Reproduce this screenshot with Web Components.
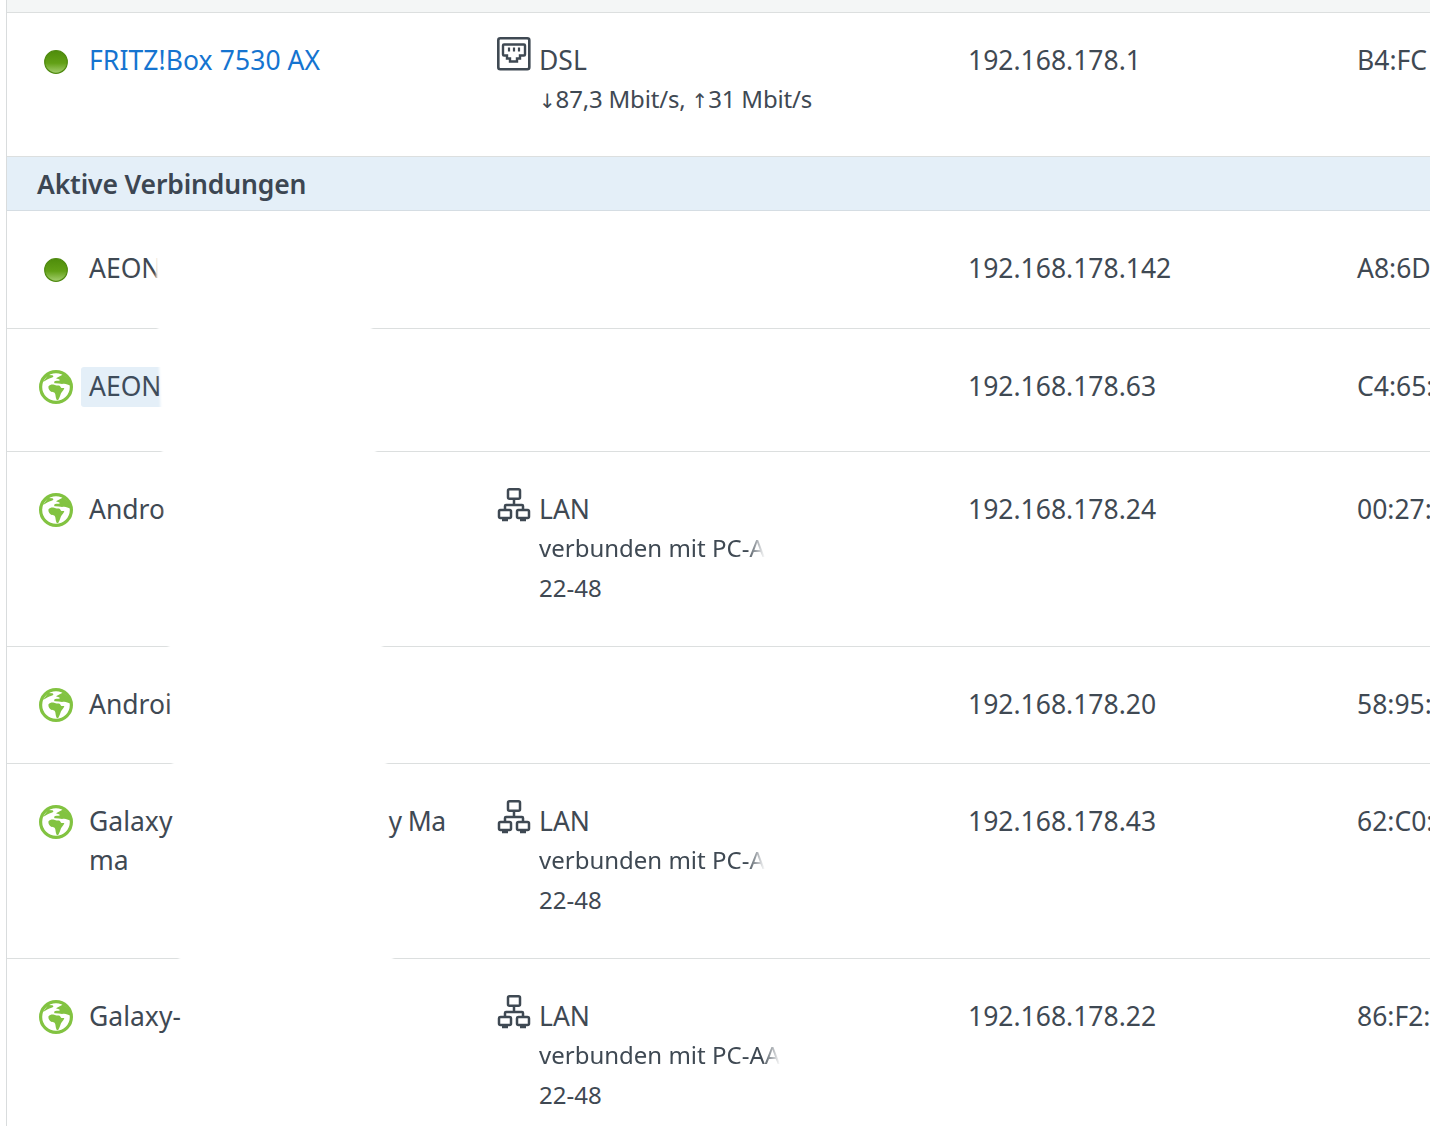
<!DOCTYPE html>
<html lang="de">
<head>
<meta charset="utf-8">
<title>Netzwerk</title>
<style>
  html, body { margin: 0; height: 100%; background: #fff; overflow: hidden; }
  body { font-family: "Noto Sans", "Liberation Sans", sans-serif; color: #3f4953; }
</style>
</head>
<body>

<net-table>
  <net-row height="144" top="47">
    <status-icon slot="icon" type="dot"></status-icon>
    <a slot="name" style="color:#1574d0;letter-spacing:.08px">FRITZ!Box 7530 AX</a>
    <conn-cell type="dsl" label="DSL">
      <speed-line><speed-arrow>↓</speed-arrow>87,3 Mbit/s, <speed-arrow>↑</speed-arrow>31 Mbit/s</speed-line>
    </conn-cell>
    <span slot="ip">192.168.178.1</span>
    <span slot="mac">B4:FC</span>
  </net-row>

  <net-section>Aktive Verbindungen</net-section>

  <net-row height="118" top="57">
    <status-icon slot="icon" type="dot"></status-icon>
    <span slot="name">AEON</span>
    <span slot="ip">192.168.178.142</span>
    <span slot="mac">A8:6D</span>
  </net-row>
  <net-row height="123" top="57">
    <status-icon slot="icon" type="globe"></status-icon>
    <name-badge slot="name">AEON</name-badge>
    <span slot="ip">192.168.178.63</span>
    <span slot="mac">C4:65:</span>
  </net-row>
  <net-row height="195" top="57">
    <status-icon slot="icon" type="globe"></status-icon>
    <span slot="name">Andro</span>
    <conn-cell type="lan" label="LAN">
      <fade-text>verbunden mit PC-A</fade-text>
      <div>22-48</div>
    </conn-cell>
    <span slot="ip">192.168.178.24</span>
    <span slot="mac">00:27:</span>
  </net-row>
  <net-row height="117" top="57">
    <status-icon slot="icon" type="globe"></status-icon>
    <span slot="name">Androi</span>
    <span slot="ip">192.168.178.20</span>
    <span slot="mac">58:95:</span>
  </net-row>
  <net-row height="195" top="57">
    <status-icon slot="icon" type="globe"></status-icon>
    <span slot="name" style="display:block;line-height:39px">Galaxy<span style="margin-left:216px;letter-spacing:-.5px">y Ma</span><br>ma</span>
    <conn-cell type="lan" label="LAN">
      <fade-text>verbunden mit PC-A</fade-text>
      <div>22-48</div>
    </conn-cell>
    <span slot="ip">192.168.178.43</span>
    <span slot="mac">62:C0:</span>
  </net-row>
  <net-row height="168" top="57" last>
    <status-icon slot="icon" type="globe"></status-icon>
    <span slot="name">Galaxy-</span>
    <conn-cell type="lan" label="LAN">
      <fade-text>verbunden mit PC-AA</fade-text>
      <div>22-48</div>
    </conn-cell>
    <span slot="ip">192.168.178.22</span>
    <span slot="mac">86:F2:</span>
  </net-row>

  <redact-patch></redact-patch>
</net-table>

<script>
  const icons = {
    dot: `<svg width="34" height="34" viewBox="0 0 34 34">
        <defs><linearGradient id="d" x1="0" y1="0" x2="0" y2="1">
          <stop offset="0" stop-color="#4f8d0b"/><stop offset=".55" stop-color="#62a016"/><stop offset="1" stop-color="#a5cf70"/>
        </linearGradient></defs>
        <circle cx="17" cy="18" r="11.3" fill="url(#d)" stroke="#4f8a10" stroke-width="1.2"/>
      </svg>`,
    globe: `<svg width="34" height="34" viewBox="0 0 34 34">
        <circle cx="17" cy="17" r="15.400" fill="#fff" stroke="#82c341" stroke-width="3.200"/>
        <path fill="#82c341" d="M4 12C7 10.500 9.500 8.500 12.500 7.800 14.500 7.300 15 6 13.500 5.200L9 5zM17 8.300 24 4.500 32 11.500 31.500 15.500C29 15 27 13.500 24.500 13.800 21.500 14.200 18.500 13 15.500 13.200 14.500 12 15.500 10.800 17.500 10.800 19 10.800 20.500 10.800 21 10 20 9 18.500 9.200 17 8.300z"/>
        <path fill="#82c341" d="M9.400 16.500c1.300-1.500 3-2.100 4.800-1.900 1.300.2 2.100 1 3.400 1 1.200 0 2.500-.2 3.300.5.600.6.700 1.500 1.500 1.800.9.300 1.900.1 2.900.2-.4 1.700-1.500 3-2.600 4.200-.7.800-.9 1.800-1.300 2.800-.5 1.500-1.100 3-1.900 4.400-.5.800-1.600.8-2 0-.7-1.500-.8-3.100-1.100-4.700-.2-1-.4-1.700-1.200-2.300-.9-.6-2.100-.3-3-.8-1.300-.7-2.800-2.500-2.800-4.400z"/>
      </svg>`,
    dsl: `<svg width="34" height="34" viewBox="0 0 34 34" fill="none" stroke="#3f4953">
        <rect x="1.300" y="1.300" width="31" height="31" rx="2" stroke-width="2.600"/>
        <path stroke-width="2.400" d="M7 7.500h20a1 1 0 0 1 1 1v9a1 1 0 0 1-1 1h-4v3h-3v3h-7v-3h-3v-3H7a1 1 0 0 1-1-1v-9a1 1 0 0 1 1-1z"/>
        <path stroke-width="2.200" d="M12 10.500v4M17 10.500v4M22 10.500v4"/>
      </svg>`,
    lan: `<svg width="34" height="34" viewBox="0 0 34 34" fill="none" stroke="#3f4953" stroke-width="2.500">
        <rect x="11" y="1.300" width="12" height="9.500" rx="1.500"/>
        <path d="M17 11v6M8 22v-4a1 1 0 0 1 1-1h16a1 1 0 0 1 1 1v4"/>
        <rect x="2" y="22" width="12" height="8" rx="1.500"/>
        <rect x="20" y="22" width="12" height="8" rx="1.500"/>
        <path stroke-width="3.400" d="M5 31.500h6M23 31.500h6"/>
      </svg>`
  };

  class NetTable extends HTMLElement {
    constructor() {
      super();
      this.attachShadow({ mode: "open" });
      this.shadowRoot.innerHTML = `
        <style>
          :host { display: block; position: relative; margin-left: 6px; height: 1126px; border-left: 1px solid #d9dcdd; font-size: 26.5px; line-height: 39.6px; }
          .top { height: 12px; background: #f4f6f6; border-bottom: 1px solid #dcdfdf; }
        </style>
        <div class="top"></div>
        <slot></slot>
      `;
    }
  }

  class NetRow extends HTMLElement {
    constructor() {
      super();
      this.attachShadow({ mode: "open" });
    }
    connectedCallback() {
      this.shadowRoot.innerHTML = `
        <style>
          :host { display: grid; grid-template-columns: 490px 471px 389px 400px; box-sizing: border-box; width: 1750px; border-bottom: 1px solid #dcdfdf; }
          :host([last]) { border-bottom: 0; }
          .name { display: flex; gap: 16px; padding-left: 32px; }
          .icon { flex: none; height: 34px; }
          .cell { white-space: nowrap; }
        </style>
        <div class="name"><div class="icon"><slot name="icon"></slot></div><div class="cell"><slot name="name"></slot></div></div>
        <div class="cell"><slot></slot></div>
        <div class="cell"><slot name="ip"></slot></div>
        <div class="cell"><slot name="mac"></slot></div>
      `;
      this.style.height = this.getAttribute("height") + "px";
      this.style.paddingTop = this.getAttribute("top") - 19 + "px";
    }
  }

  class NetSection extends HTMLElement {
    constructor() {
      super();
      this.attachShadow({ mode: "open" });
      this.shadowRoot.innerHTML = `
        <style>
          :host { display: block; box-sizing: border-box; height: 54px; padding: 8px 0 0 30px; background: #e4eff8; border-bottom: 1px solid #d5dde3; font-weight: 600; font-size: 26.5px; letter-spacing: -.15px; color: #3c4652; }
        </style>
        <slot></slot>
      `;
    }
  }

  class StatusIcon extends HTMLElement {
    constructor() {
      super();
      this.attachShadow({ mode: "open" });
    }
    connectedCallback() {
      this.shadowRoot.innerHTML = `
        <style>:host { display: block; width: 34px; height: 34px; margin-top: 3px; } svg { display: block; }</style>
        ${icons[this.getAttribute("type")]}
      `;
    }
  }

  class ConnCell extends HTMLElement {
    constructor() {
      super();
      this.attachShadow({ mode: "open" });
    }
    connectedCallback() {
      const type = this.getAttribute("type");
      this.shadowRoot.innerHTML = `
        <style>
          :host { display: grid; grid-template-columns: 34px 1fr; column-gap: 8px; }
          .ic { margin-top: ${type === "dsl" ? -4 : -2}px; height: 34px; }
          svg { display: block; }
          .sub { grid-column: 2; font-size: 24px; line-height: 40px; margin-top: -2px; }
        </style>
        <div class="ic">${icons[type]}</div>
        <div>${this.getAttribute("label")}</div>
        <div class="sub"><slot></slot></div>
      `;
    }
  }

  class NameBadge extends HTMLElement {
    constructor() {
      super();
      this.attachShadow({ mode: "open" });
      this.shadowRoot.innerHTML = `
        <style>
          :host { display: inline-block; margin-left: -8px; padding: 0 30px 0 8px; background: #e4eff8; border-radius: 3px; color: #3e4c5b; }
        </style>
        <slot></slot>
      `;
    }
  }

  class SpeedLine extends HTMLElement {
    constructor() {
      super();
      this.attachShadow({ mode: "open" });
      this.shadowRoot.innerHTML = `<style>:host { display: block; letter-spacing: -.18px; }</style><slot></slot>`;
    }
  }

  class SpeedArrow extends HTMLElement {
    constructor() {
      super();
      this.attachShadow({ mode: "open" });
      this.shadowRoot.innerHTML = `<style>:host { font-family: "DejaVu Sans", sans-serif; font-size: 20px; color: #3f4953; }</style><slot></slot>`;
    }
  }

  class FadeText extends HTMLElement {
    constructor() {
      super();
      this.attachShadow({ mode: "open" });
      this.shadowRoot.innerHTML = `
        <style>
          :host { display: block; width: max-content; -webkit-mask-image: linear-gradient(to right, #000 calc(100% - 18px), transparent); mask-image: linear-gradient(to right, #000 calc(100% - 18px), transparent); }
        </style>
        <slot></slot>
      `;
    }
  }

  // white patch laid over the names, leans a little to the right going down
  class RedactPatch extends HTMLElement {
    constructor() {
      super();
      this.attachShadow({ mode: "open" });
      this.shadowRoot.innerHTML = `
        <style>
          :host { position: absolute; left: 146.5px; top: 214px; width: 214px; height: 930px; background: #fff; filter: blur(1.2px); transform-origin: 0 0; transform: skewX(1.92deg); }
        </style>
      `;
    }
  }

  customElements.define("net-table", NetTable);
  customElements.define("net-row", NetRow);
  customElements.define("net-section", NetSection);
  customElements.define("status-icon", StatusIcon);
  customElements.define("conn-cell", ConnCell);
  customElements.define("name-badge", NameBadge);
  customElements.define("speed-line", SpeedLine);
  customElements.define("speed-arrow", SpeedArrow);
  customElements.define("fade-text", FadeText);
  customElements.define("redact-patch", RedactPatch);
</script>
</body>
</html>
